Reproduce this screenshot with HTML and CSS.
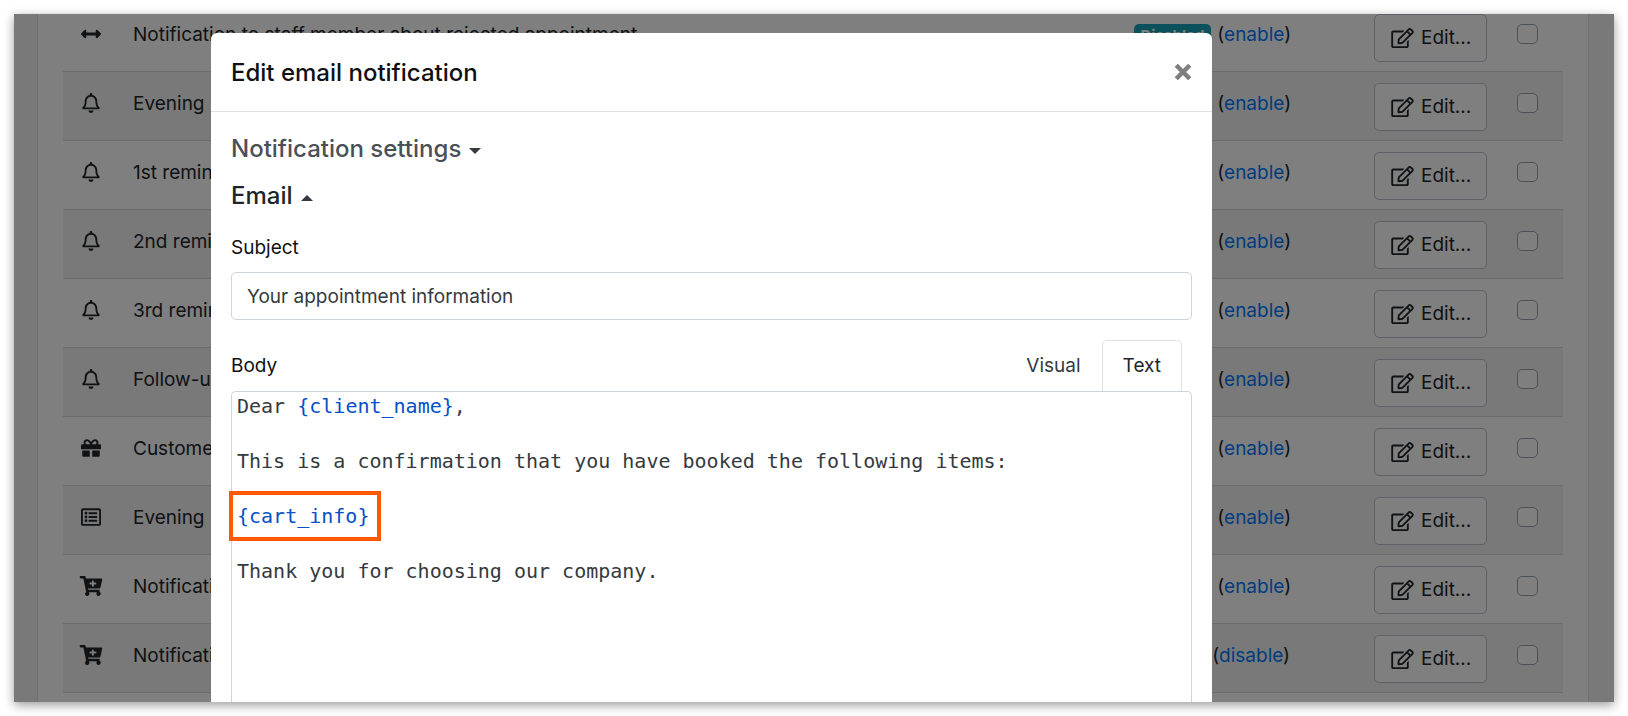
FILE: index.html
```html
<!DOCTYPE html>
<html lang="en">
<head>
<meta charset="utf-8">
<title>Edit email notification</title>
<link rel="stylesheet" href="styles.css">
</head>
<body>
<svg class="sprite" aria-hidden="true">
  <symbol id="i-arrows" viewBox="0 0 512 512"><path fill="currentColor" d="M377.941 169.941V216H134.059v-46.059c0-21.382-25.851-32.09-40.971-16.971L7.029 239.029c-9.373 9.373-9.373 24.568 0 33.941l86.059 86.059c15.119 15.119 40.971 4.411 40.971-16.971V296h243.882v46.059c0 21.382 25.851 32.09 40.971 16.971l86.059-86.059c9.373-9.373 9.373-24.568 0-33.941l-86.059-86.059c-15.119-15.12-40.971-4.412-40.971 16.97z"/></symbol>
  <symbol id="i-bell" viewBox="0 0 448 512"><path fill="currentColor" d="M439.39 362.29c-19.32-20.76-55.47-51.99-55.47-154.29 0-77.7-54.48-139.9-127.94-155.16V32c0-17.67-14.32-32-31.98-32s-31.98 14.33-31.98 32v20.84C118.56 68.1 64.08 130.3 64.08 208c0 102.3-36.15 133.53-55.47 154.29-6 6.45-8.66 14.16-8.61 21.71.11 16.4 12.98 32 32.1 32h383.8c19.12 0 32-15.6 32.1-32 .05-7.55-2.61-15.27-8.61-21.71zM67.53 368c21.22-27.97 44.42-74.33 44.53-159.42 0-.2-.06-.38-.06-.58 0-61.86 50.14-112 112-112s112 50.14 112 112c0 .2-.06.38-.06.58.11 85.1 23.31 131.46 44.53 159.42H67.53zM224 512c35.32 0 63.97-28.65 63.97-64H160.03c0 35.35 28.65 64 63.97 64z"/></symbol>
  <symbol id="i-gift" viewBox="0 0 512 512"><path fill="currentColor" d="M32 448c0 17.7 14.3 32 32 32h160V320H32v128zm256 32h160c17.7 0 32-14.3 32-32V320H288v160zm192-320h-42.100c6.200-12.100 10.100-25.500 10.100-40 0-48.500-39.500-88-88-88-41.600 0-68.500 21.300-103 68.300-34.500-47-61.400-68.300-103-68.300-48.500 0-88 39.500-88 88 0 14.500 3.800 27.900 10.100 40H32c-17.700 0-32 14.300-32 32v80c0 8.800 7.200 16 16 16h480c8.800 0 16-7.200 16-16v-80c0-17.700-14.300-32-32-32zm-326.100 0c-22.100 0-40-17.900-40-40s17.900-40 40-40c19.900 0 34.600 3.300 86.100 80h-86.100zm206.100 0h-86.100c51.400-76.500 65.700-80 86.100-80 22.100 0 40 17.900 40 40s-17.900 40-40 40z"/></symbol>
  <symbol id="i-list" viewBox="0 0 512 512"><path fill="currentColor" d="M464 32H48C21.490 32 0 53.490 0 80v352c0 26.510 21.490 48 48 48h416c26.510 0 48-21.490 48-48V80c0-26.510-21.490-48-48-48zm-6 400H54a6 6 0 0 1-6-6V86a6 6 0 0 1 6-6h404a6 6 0 0 1 6 6v340a6 6 0 0 1-6 6zm-42-92v24c0 6.627-5.373 12-12 12H204c-6.627 0-12-5.373-12-12v-24c0-6.627 5.373-12 12-12h200c6.627 0 12 5.373 12 12zm0-96v24c0 6.627-5.373 12-12 12H204c-6.627 0-12-5.373-12-12v-24c0-6.627 5.373-12 12-12h200c6.627 0 12 5.373 12 12zm0-96v24c0 6.627-5.373 12-12 12H204c-6.627 0-12-5.373-12-12v-24c0-6.627 5.373-12 12-12h200c6.627 0 12 5.373 12 12zm-252 12c0 19.882-16.118 36-36 36s-36-16.118-36-36 16.118-36 36-36 36 16.118 36 36zm0 96c0 19.882-16.118 36-36 36s-36-16.118-36-36 16.118-36 36-36 36 16.118 36 36zm0 96c0 19.882-16.118 36-36 36s-36-16.118-36-36 16.118-36 36-36 36 16.118 36 36z"/></symbol>
  <symbol id="i-cart" viewBox="0 0 576 512"><path fill="currentColor" d="M504.717 320H211.572l6.545 32h268.418c15.401 0 26.816 14.301 23.403 29.319l-5.517 24.276C523.112 414.668 536 433.828 536 456c0 31.202-25.519 56.444-56.824 55.994-29.823-.429-54.35-24.631-55.155-54.447-.44-16.287 6.085-31.049 16.803-41.548H231.176C241.553 426.165 248 440.326 248 456c0 31.813-26.528 57.431-58.670 55.938-28.540-1.325-51.751-24.385-53.251-52.917-1.158-22.034 10.436-41.455 28.051-51.586L93.883 64H24C10.745 64 0 53.255 0 40V24C0 10.745 10.745 0 24 0h102.529c11.401 0 21.228 8.021 23.513 19.190L159.208 64H551.990c15.401 0 26.816 14.301 23.403 29.319l-47.273 208C525.637 312.246 515.923 320 504.717 320zM408 168h-48v-40c0-8.837-7.163-16-16-16h-16c-8.837 0-16 7.163-16 16v40h-48c-8.837 0-16 7.163-16 16v16c0 8.837 7.163 16 16 16h48v40c0 8.837 7.163 16 16 16h16c8.837 0 16-7.163 16-16v-40h48c8.837 0 16-7.163 16-16v-16c0-8.837-7.163-16-16-16z"/></symbol>
  <symbol id="i-edit" viewBox="0 0 576 512"><path fill="currentColor" d="M402.300 344.900l32-32c5-5 13.700-1.500 13.700 5.700V464c0 26.500-21.500 48-48 48H48c-26.500 0-48-21.500-48-48V112c0-26.500 21.500-48 48-48h273.500c7.100 0 10.700 8.600 5.700 13.700l-32 32c-1.500 1.500-3.500 2.300-5.700 2.300H48v352h352V350.500c0-2.100.8-4.100 2.300-5.600zm156.600-201.800L296.300 405.700l-90.400 10c-26.200 2.900-48.500-19.200-45.600-45.600l10-90.400L432.900 17.100c22.900-22.900 59.900-22.900 82.700 0l43.200 43.200c22.900 22.900 22.900 60 .1 82.800zM460.100 174L402 115.900 216.200 301.800l-7.300 65.300 65.300-7.300L460.100 174zm64.800-79.700l-43.200-43.200c-4.100-4.100-10.800-4.100-14.800 0L436 82l58.100 58.100 30.900-30.900c4-4.200 4-10.800-.1-14.900z"/></symbol>
</svg>
<div class="window">
  <main class="card">
    <table class="list">
      <tbody>
        <tr><td class="c-icon"><svg class="icon"><use href="#i-arrows"/></svg></td><td class="c-name">Notification to staff member about rejected appointment</td><td class="c-state"><span class="badge">Disabled</span> (<a href="#">enable</a>)</td><td class="c-edit"><button type="button" class="btn"><svg class="pen"><use href="#i-edit"/></svg>Edit...</button></td><td class="c-check"><input type="checkbox" aria-label="Select rejected appointment notification"></td></tr>
        <tr><td class="c-icon"><svg class="icon"><use href="#i-bell"/></svg></td><td class="c-name">Evening</td><td class="c-state"><span class="badge">Disabled</span> (<a href="#">enable</a>)</td><td class="c-edit"><button type="button" class="btn"><svg class="pen"><use href="#i-edit"/></svg>Edit...</button></td><td class="c-check"><input type="checkbox" aria-label="Select evening reminder"></td></tr>
        <tr><td class="c-icon"><svg class="icon"><use href="#i-bell"/></svg></td><td class="c-name">1st reminder</td><td class="c-state"><span class="badge">Disabled</span> (<a href="#">enable</a>)</td><td class="c-edit"><button type="button" class="btn"><svg class="pen"><use href="#i-edit"/></svg>Edit...</button></td><td class="c-check"><input type="checkbox" aria-label="Select 1st reminder"></td></tr>
        <tr><td class="c-icon"><svg class="icon"><use href="#i-bell"/></svg></td><td class="c-name">2nd reminder</td><td class="c-state"><span class="badge">Disabled</span> (<a href="#">enable</a>)</td><td class="c-edit"><button type="button" class="btn"><svg class="pen"><use href="#i-edit"/></svg>Edit...</button></td><td class="c-check"><input type="checkbox" aria-label="Select 2nd reminder"></td></tr>
        <tr><td class="c-icon"><svg class="icon"><use href="#i-bell"/></svg></td><td class="c-name">3rd reminder</td><td class="c-state"><span class="badge">Disabled</span> (<a href="#">enable</a>)</td><td class="c-edit"><button type="button" class="btn"><svg class="pen"><use href="#i-edit"/></svg>Edit...</button></td><td class="c-check"><input type="checkbox" aria-label="Select 3rd reminder"></td></tr>
        <tr><td class="c-icon"><svg class="icon"><use href="#i-bell"/></svg></td><td class="c-name">Follow-up</td><td class="c-state"><span class="badge">Disabled</span> (<a href="#">enable</a>)</td><td class="c-edit"><button type="button" class="btn"><svg class="pen"><use href="#i-edit"/></svg>Edit...</button></td><td class="c-check"><input type="checkbox" aria-label="Select follow-up"></td></tr>
        <tr><td class="c-icon"><svg class="icon"><use href="#i-gift"/></svg></td><td class="c-name">Customer</td><td class="c-state"><span class="badge">Disabled</span> (<a href="#">enable</a>)</td><td class="c-edit"><button type="button" class="btn"><svg class="pen"><use href="#i-edit"/></svg>Edit...</button></td><td class="c-check"><input type="checkbox" aria-label="Select customer greeting"></td></tr>
        <tr><td class="c-icon"><svg class="icon"><use href="#i-list"/></svg></td><td class="c-name">Evening</td><td class="c-state"><span class="badge">Disabled</span> (<a href="#">enable</a>)</td><td class="c-edit"><button type="button" class="btn"><svg class="pen"><use href="#i-edit"/></svg>Edit...</button></td><td class="c-check"><input type="checkbox" aria-label="Select evening agenda"></td></tr>
        <tr><td class="c-icon"><svg class="icon"><use href="#i-cart"/></svg></td><td class="c-name">Notification</td><td class="c-state"><span class="badge">Disabled</span> (<a href="#">enable</a>)</td><td class="c-edit"><button type="button" class="btn"><svg class="pen"><use href="#i-edit"/></svg>Edit...</button></td><td class="c-check"><input type="checkbox" aria-label="Select first cart notification"></td></tr>
        <tr><td class="c-icon"><svg class="icon"><use href="#i-cart"/></svg></td><td class="c-name">Notification</td><td class="c-state"><span class="badge badge-on">Enabled</span> (<a href="#">disable</a>)</td><td class="c-edit"><button type="button" class="btn"><svg class="pen"><use href="#i-edit"/></svg>Edit...</button></td><td class="c-check"><input type="checkbox" aria-label="Select second cart notification"></td></tr>
        <tr><td colspan="5"></td></tr>
      </tbody>
    </table>
  </main>
  <div class="overlay">
    <section class="modal" role="dialog" aria-labelledby="title">
      <header class="modal-head">
        <h1 class="title" id="title">Edit email notification</h1>
        <button type="button" class="close" aria-label="Close"><svg class="close-icon" viewBox="0 0 16 16"><path d="M2 2l12 12M14 2L2 14" stroke="currentColor" stroke-width="4"/></svg></button>
      </header>
      <div class="modal-body">
        <button type="button" class="section section-closed" aria-expanded="false">Notification settings<span class="caret caret-down"></span></button>
        <button type="button" class="section" aria-expanded="true">Email<span class="caret caret-up"></span></button>
        <label class="label" for="subject">Subject</label>
        <input class="input" id="subject" type="text" value="Your appointment information">
        <div class="body-head">
          <span class="label" id="body-label">Body</span>
          <div class="tabs" role="tablist">
            <button type="button" class="tab" role="tab" aria-selected="false">Visual</button>
            <button type="button" class="tab tab-active" role="tab" aria-selected="true">Text</button>
          </div>
        </div>
        <div class="editor" role="textbox" aria-multiline="true" aria-labelledby="body-label" contenteditable="true" spellcheck="false">
          <p>Dear <span class="code">{client_name}</span>,</p>
          <p>This is a confirmation that you have booked the following items:</p>
          <p><span class="code marked">{cart_info}</span></p>
          <p>Thank you for choosing our company.</p>
        </div>
      </div>
    </section>
  </div>
</div>
</body>
</html>
```
FILE: styles.css
```css
* { box-sizing: border-box; }

body {
  margin: 0;
  height: 100vh;
  padding: 14px;
  background: #fff;
  color: #212529;
  font: 19px/28px Inter, "Liberation Sans", sans-serif;
  overflow: hidden;
}

button, input { font: inherit; color: inherit; }
.sprite { display: none; }

.window {
  display: grid;
  grid-template: minmax(0, 1fr) / minmax(0, 1fr);
  height: 100%;
  overflow: hidden;
  background: #f2f2f2;
  box-shadow: 0 3px 10px rgba(0, 0, 0, .4);
}

.card, .overlay { grid-area: 1 / 1; }

.card {
  margin: 0 25px 0 23px;
  padding: 0 25px;
  border: solid #e2e2e2;
  border-width: 0 1px;
  background: #fff;
}

.list {
  width: 100%;
  border-collapse: separate;
  border-spacing: 0;
  table-layout: fixed;
  margin-top: -11px;
}
.list tr { height: 69px; }
.list td {
  padding: 10px 0 0;
  vertical-align: top;
  border-bottom: 1px solid #d8d8d8;
  white-space: nowrap;
}
.list tr:nth-child(even) { background: #f2f2f2; }
.list .c-icon { width: 70px; padding: 21px 0 0 16px; }
.list .c-name { padding-top: 18px; }
.list .c-state { width: 240px; padding-top: 18px; }
.list .c-edit { width: 116px; }
.list .c-check { width: 73px; padding: 21px 0 0 27px; }
.c-state a { color: #007bff; text-decoration: none; }

.icon { display: block; width: 24px; height: 20px; }

.badge {
  display: inline-block;
  width: 77px;
  margin-right: 1px;
  border-radius: 5px;
  background: #17a2b8;
  color: #fff;
  font-size: 15px;
  font-weight: 700;
  line-height: 24px;
  text-align: center;
}
.badge-on { width: 72px; background: #28a745; }

.btn {
  display: flex;
  align-items: center;
  gap: 7px;
  height: 48px;
  width: 113px;
  margin-top: 1px;
  padding: 0 16px;
  border: 1px solid #bcc3ca;
  border-radius: 5px;
  background: #fff;
}
.pen { width: 23px; height: 20px; flex: none; }

.c-check input {
  appearance: none;
  display: block;
  width: 21px;
  height: 20px;
  margin: 0;
  border: 1px solid #9aa2aa;
  border-radius: 5px;
  background: #fff;
}

.overlay {
  z-index: 1;
  display: flex;
  padding: 19px 402px 0 197px;
  background: rgba(0, 0, 0, .5);
}

.modal {
  display: flex;
  flex-direction: column;
  flex: 1;
  min-width: 0;
  border-radius: 6px 6px 0 0;
  background: #fff;
}

.modal-head {
  display: flex;
  justify-content: space-between;
  align-items: center;
  height: 79px;
  flex: none;
  padding: 0 20px;
  border-bottom: 1px solid #dee2e6;
}
.title { margin: 2px 0 0; font-size: 24px; font-weight: 500; color: #111; }
.close { display: flex; padding: 0; border: 0; background: none; color: #7f7f7f; }
.close-icon { width: 18px; height: 18px; }

.modal-body {
  display: flex;
  flex-direction: column;
  flex: 1;
  min-height: 0;
  padding: 21px 20px 0;
}

.section {
  display: flex;
  align-items: center;
  gap: 8px;
  align-self: flex-start;
  margin-bottom: 15px;
  padding: 0;
  border: 0;
  background: none;
  font-size: 24px;
  font-weight: 500;
  line-height: 32px;
}
.section-closed { color: #495057; }
.caret { border: solid transparent; border-width: 0 6px; margin-top: 4px; }
.caret-down { border-top: 6px solid #343a40; }
.caret-up { border-bottom: 6px solid #343a40; }

.label { margin-top: 7px; color: #111; }

.input {
  height: 48px;
  margin-top: 10px;
  padding: 0 15px;
  border: 1px solid #ced4da;
  border-radius: 5px;
  background: #fff;
  color: #343a40;
}

.body-head {
  display: flex;
  justify-content: space-between;
  align-items: center;
  margin-top: 20px;
  padding-right: 10px;
}
.body-head .label { margin: 0; }
.tabs { display: flex; }
.tab {
  height: 51px;
  padding: 0 20px;
  border: 1px solid transparent;
  border-bottom: 0;
  border-radius: 5px 5px 0 0;
  background: none;
  color: #343a40;
}
.tab-active { border-color: #dee2e6; background: #fff; color: #212529; }

.editor {
  display: flex;
  flex-direction: column;
  gap: 27px;
  flex: 1;
  min-height: 0;
  padding: 0 5px;
  border: 1px solid #ced4da;
  border-bottom: 0;
  border-radius: 5px 5px 0 0;
  color: #343a40;
  font: 20px/28px "DejaVu Sans Mono", "Liberation Mono", monospace;
}
.editor p { margin: 0; }
.code { color: #0550c8; }
.marked { position: relative; display: inline-block; }
.marked::after {
  content: "";
  position: absolute;
  inset: -11px -12px -11px -8px;
  border: 4px solid #ff5a00;
}
```
